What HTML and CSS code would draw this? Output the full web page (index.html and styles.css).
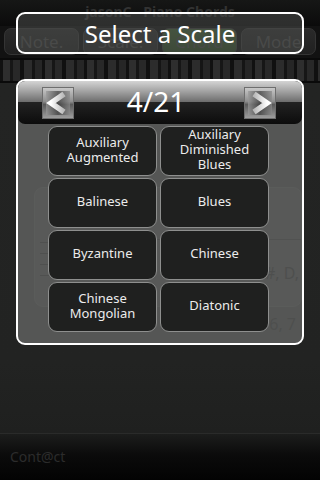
FILE: index.html
```html
<!DOCTYPE html>
<html>
<head>
<meta charset="utf-8">
<link rel="stylesheet" href="styles.css">
</head>
<body>
<div class="app">
  <div class="titlebar">jasonC - Piano Chords</div>
  <div class="tabs">
    <div class="tab">Note.</div>
    <div class="tab">Scale.</div>
    <div class="tab sel">Chord</div>
    <div class="tab">Mode</div>
  </div>
  <div class="keys"></div>
  <div class="content">
    <div class="panel">
      <div class="ticks"><i></i><i></i><i></i><i></i></div>
      <div class="pmain">
        <div class="rule"></div>
        <div class="pnotes">#, D,</div>
      </div>
    </div>
    <div class="below">6, 7</div>
  </div>
  <div class="footer">Cont@ct</div>
</div>

<div class="overlay">
  <div class="dlg-title">Select a Scale</div>
  <div class="dlg">
    <div class="dlg-head">
      <div class="arrow">
        <svg width="32" height="32" viewBox="0 0 32 32">
          <defs>
            <linearGradient id="abg" x1="0" y1="0" x2="0" y2="1">
              <stop offset="0" stop-color="#cacaca"/>
              <stop offset="0.45" stop-color="#8e8e8e"/>
              <stop offset="0.55" stop-color="#5a5a5a"/>
              <stop offset="1" stop-color="#a0a0a0"/>
            </linearGradient>
            <linearGradient id="ain" x1="0" y1="0" x2="1" y2="0">
              <stop offset="0" stop-color="#9a9a9a"/>
              <stop offset="0.5" stop-color="#3a3a3a"/>
              <stop offset="1" stop-color="#8a8a8a"/>
            </linearGradient>
            <linearGradient id="chl" x1="0" y1="0" x2="1" y2="0">
              <stop offset="0" stop-color="#ffffff"/>
              <stop offset="1" stop-color="#b8b8b8"/>
            </linearGradient>
          </defs>
          <rect x="0.5" y="0.5" width="31" height="31" fill="url(#abg)" stroke="#6e6e6e"/>
          <rect x="4" y="4" width="24" height="24" fill="url(#ain)" opacity="0.7"/>
          <polyline points="22,7 9,16 22,25" fill="none" stroke="url(#chl)" stroke-width="5.5" stroke-linejoin="miter"/>
        </svg>
      </div>
      <div class="page">4/21</div>
      <div class="arrow">
        <svg width="32" height="32" viewBox="0 0 32 32">
          <defs>
            <linearGradient id="chr" x1="1" y1="0" x2="0" y2="0">
              <stop offset="0" stop-color="#ffffff"/>
              <stop offset="1" stop-color="#b8b8b8"/>
            </linearGradient>
          </defs>
          <rect x="0.5" y="0.5" width="31" height="31" fill="url(#abg)" stroke="#6e6e6e"/>
          <rect x="4" y="4" width="24" height="24" fill="url(#ain)" opacity="0.7"/>
          <polyline points="10,7 23,16 10,25" fill="none" stroke="url(#chr)" stroke-width="5.5" stroke-linejoin="miter"/>
        </svg>
      </div>
    </div>
    <div class="grid">
      <div class="btn">Auxiliary<br>Augmented</div>
      <div class="btn">Auxiliary<br>Diminished<br>Blues</div>
      <div class="btn">Balinese</div>
      <div class="btn">Blues</div>
      <div class="btn">Byzantine</div>
      <div class="btn">Chinese</div>
      <div class="btn">Chinese<br>Mongolian</div>
      <div class="btn">Diatonic</div>
    </div>
  </div>
</div>
</body>
</html>
```
FILE: styles.css
```css
* { box-sizing: border-box; margin: 0; padding: 0; }
html, body {
  width: 320px;
  height: 480px;
  overflow: hidden;
  background: #232423;
  font-family: "Noto Sans", "Open Sans", "DejaVu Sans", sans-serif;
}
.app {
  height: 480px;
  display: flex;
  flex-direction: column;
}
.titlebar {
  height: 26px;
  background: linear-gradient(#161716, #0b0b0b);
  color: #333;
  font-size: 14px;
  font-weight: bold;
  text-align: center;
  line-height: 24px;
}
.tabs {
  height: 32px;
  display: flex;
  gap: 4px;
  padding: 2px 4px 3px;
  background: #121212;
}
.tab {
  flex: 1;
  border-radius: 7px;
  background: linear-gradient(#2a2a2a, #202020);
  border: 1px solid #343434;
  color: #424242;
  font-size: 17px;
  display: flex;
  align-items: center;
  justify-content: center;
}
.tab.sel {
  background: linear-gradient(#3a5530, #2a3f22);
}
.keys {
  height: 25px;
  border-top: 2px solid #0a0a0a;
  border-bottom: 2px solid #0a0a0a;
  background:
    repeating-linear-gradient(90deg,
      #111 0 3px, #2e2e2e 3px 10px, #161616 10px 13px, #282828 13px 20px,
      #101010 20px 24px, #2c2c2c 24px 32px, #151515 32px 35px, #262626 35px 42px);
}
.content {
  flex: 1;
  display: flex;
  flex-direction: column;
  background: linear-gradient(#232423, #222322 80%, #1f201f);
}
.panel {
  margin: 104px 18px 0 34px;
  height: 120px;
  border-radius: 9px;
  border: 1px solid #353635;
  background: #2c2d2c;
  display: flex;
}
.ticks {
  width: 116px;
  display: flex;
  flex-direction: column;
  gap: 10px;
  padding: 54px 0 0 5px;
}
.ticks i {
  display: block;
  width: 10px;
  height: 1px;
  background: #0e0e0e;
}
.pmain {
  flex: 1;
  padding-top: 51px;
}
.rule {
  height: 1px;
  background: #151515;
}
.pnotes {
  text-align: right;
  padding: 22px 2px 0 0;
  font-size: 16px;
  color: #0a0a0a;
}
.below {
  text-align: right;
  padding: 6px 24px 0 0;
  font-size: 16px;
  color: #0a0a0a;
}
.footer {
  height: 47px;
  border-top: 1px solid #2a2b2a;
  background: linear-gradient(#1c1d1c, #0b0b0b 45%, #030303);
  color: #2c2c2c;
  font-size: 14px;
  padding: 13px 10px 0;
}

/* dialogs over the dimmed app */
.overlay {
  position: absolute;
  left: 0;
  top: 0;
  width: 320px;
  height: 480px;
  display: flex;
  flex-direction: column;
  align-items: center;
  padding-top: 12px;
}
.dlg-title {
  width: 288px;
  height: 42px;
  border: 2px solid #fff;
  border-radius: 9px;
  background: rgba(80, 81, 80, 0.5);
  color: #fff;
  font-size: 24px;
  display: flex;
  align-items: center;
  justify-content: center;
}
.dlg {
  width: 288px;
  height: 266px;
  margin-top: 25px;
  border: 2px solid #fff;
  border-radius: 9px;
  background: rgba(107, 108, 107, 0.7);
  overflow: hidden;
  display: flex;
  flex-direction: column;
}
.dlg-head {
  height: 43px;
  flex: none;
  border-radius: 7px;
  background: linear-gradient(#d4d4d4, #a0a0a0 25%, #6e6e6e 48%, #222 50%, #0c0c0c);
  display: flex;
  align-items: center;
  justify-content: space-between;
  padding: 0 26px 0 24px;
}
.arrow {
  width: 32px;
  height: 32px;
  display: flex;
}
.page {
  color: #fff;
  font-size: 28px;
  line-height: 32px;
  margin: -3px 6px 0 0;
}
.grid {
  display: grid;
  grid-template-columns: 109px 109px;
  grid-auto-rows: 50px;
  gap: 2px 3px;
  padding: 2px 0 0 30px;
}
.btn {
  background: #1f201f;
  border: 1px solid #8e8f8e;
  border-radius: 9px;
  color: #ececec;
  font-size: 13px;
  line-height: 15px;
  padding-bottom: 3px;
  display: flex;
  align-items: center;
  justify-content: center;
  text-align: center;
}
```
